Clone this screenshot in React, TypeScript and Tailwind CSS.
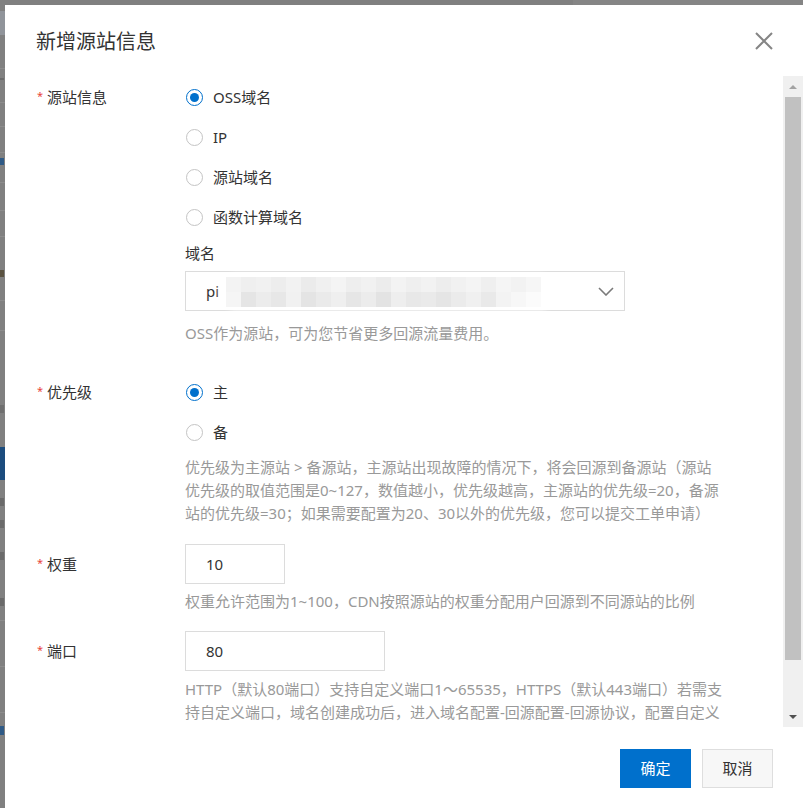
import React from "react";

const FONT = "font-['Noto_Sans','Noto_Sans_CJK_SC',sans-serif]";

function Radio({ checked, label }: { checked?: boolean; label: string }) {
  return (
    <div className="flex h-[40px] items-center">
      <span
        className={
          checked
            ? "ml-[1px] flex h-[17px] w-[17px] items-center justify-center rounded-full border border-[#0070cc] bg-white"
            : "ml-[1px] flex h-[17px] w-[17px] items-center justify-center rounded-full border border-[#c4c4c4] bg-white"
        }
      >
        {checked && <span className="h-[9px] w-[9px] rounded-full bg-[#0070cc]" />}
      </span>
      <span className="ml-[10px] text-[15px] leading-[20px] text-[#333]">{label}</span>
    </div>
  );
}

function Label({ text }: { text: string }) {
  return (
    <div className="flex h-[40px] w-[148px] shrink-0 items-center">
      <span className="mr-[4px] mt-[-2px] text-[11px] leading-[12px] text-[#e8443a]">*</span>
      <span className="text-[15px] leading-[20px] text-[#333]">{text}</span>
    </div>
  );
}

const blockRow1 = [
  "bg-[#f3f3f3]", "bg-[#efefef]", "bg-[#f1f1f1]", "bg-[#ededed]", "bg-[#f2f2f2]", "bg-[#ebebeb]", "bg-[#f0f0f0]",
  "bg-[#f4f4f4]", "bg-[#eeeeee]", "bg-[#f1f1f1]", "bg-[#ececec]", "bg-[#f3f3f3]", "bg-[#efefef]", "bg-[#f2f2f2]",
  "bg-[#ededed]", "bg-[#f1f1f1]", "bg-[#f4f4f4]", "bg-[#efefef]", "bg-[#f5f5f5]", "bg-[#f2f2f2]", "bg-[#f6f6f6]",
];
const blockRow2 = [
  "bg-[#f5f5f5]", "bg-[#e5e5e5]", "bg-[#ececec]", "bg-[#e7e7e7]", "bg-[#f1f1f1]", "bg-[#e4e4e4]", "bg-[#eaeaea]",
  "bg-[#efefef]", "bg-[#e6e6e6]", "bg-[#ececec]", "bg-[#e3e3e3]", "bg-[#eeeeee]", "bg-[#e8e8e8]", "bg-[#eaeaea]",
  "bg-[#e5e5e5]", "bg-[#ebebeb]", "bg-[#f0f0f0]", "bg-[#e9e9e9]", "bg-[#f3f3f3]", "bg-[#f7f7f7]", "bg-[#fbfbfb]",
];

export default function App() {
  return (
    <div className={`relative h-[808px] w-[803px] overflow-hidden bg-[#808080] ${FONT}`}>
      {/* background page glimpse on the left strip */}
      <div className="absolute left-0 top-0 h-full w-[5px]">
        <div className="absolute left-0 top-[11px] h-[24px] w-[5px] bg-[#90949a]" />
        <div className="absolute left-0 top-[68px] h-[1px] w-[5px] bg-[#8c8c8c]" />
        <div className="absolute left-0 top-[78px] h-[2px] w-[4px] bg-[#6b6b6b]" />
        <div className="absolute left-0 top-[102px] h-[1px] w-[5px] bg-[#8c8c8c]" />
        <div className="absolute left-0 top-[126px] h-[1px] w-[5px] bg-[#8c8c8c]" />
        <div className="absolute left-0 top-[158px] h-[7px] w-[4px] bg-[#2f5a86]" />
        <div className="absolute left-0 top-[152px] h-[1px] w-[5px] bg-[#8c8c8c]" />
        <div className="absolute left-0 top-[182px] h-[1px] w-[5px] bg-[#8c8c8c]" />
        <div className="absolute left-0 top-[210px] h-[1px] w-[5px] bg-[#8c8c8c]" />
        <div className="absolute left-0 top-[236px] h-[1px] w-[5px] bg-[#8c8c8c]" />
        <div className="absolute left-0 top-[270px] h-[7px] w-[4px] bg-[#5a5240]" />
        <div className="absolute left-0 top-[300px] h-[1px] w-[5px] bg-[#8c8c8c]" />
        <div className="absolute left-0 top-[330px] h-[1px] w-[5px] bg-[#8c8c8c]" />
        <div className="absolute left-0 top-[405px] h-[8px] w-[4px] bg-[#6f6f6f]" />
        <div className="absolute left-0 top-[447px] h-[33px] w-[5px] bg-[#1c4c7e]" />
        <div className="absolute left-0 top-[498px] h-[8px] w-[4px] bg-[#6a6a6a]" />
        <div className="absolute left-0 top-[520px] h-[8px] w-[4px] bg-[#6a6a6a]" />
        <div className="absolute left-0 top-[552px] h-[8px] w-[4px] bg-[#6a6a6a]" />
        <div className="absolute left-0 top-[598px] h-[8px] w-[4px] bg-[#6a6a6a]" />
        <div className="absolute left-0 top-[620px] h-[1px] w-[5px] bg-[#8c8c8c]" />
        <div className="absolute left-0 top-[666px] h-[1px] w-[5px] bg-[#8c8c8c]" />
        <div className="absolute left-0 top-[712px] h-[1px] w-[5px] bg-[#8c8c8c]" />
        <div className="absolute left-0 top-[726px] h-[9px] w-[4px] bg-[#2f5a86]" />
      </div>
      <div className="absolute right-0 top-0 h-[5px] w-[230px] bg-[#858585]" />

      {/* dialog */}
      <div className="relative ml-[5px] mt-[5px] flex h-[803px] w-[798px] flex-col bg-white">
        {/* header */}
        <div className="relative h-[71px] shrink-0">
          <div className="pl-[31px] pt-[23px] text-[20px] leading-[28px] text-[#333]">新增源站信息</div>
          <button className="absolute right-[30px] top-[27px] h-[18px] w-[18px]">
            <svg viewBox="0 0 18 18" className="h-[18px] w-[18px]">
              <path d="M1 1 L17 17 M17 1 L1 17" stroke="#858585" strokeWidth="2" fill="none" />
            </svg>
          </button>
        </div>

        {/* body */}
        <div className="flex h-[651px] shrink-0">
          <div className="flex-1 overflow-hidden pl-[32px] pt-[1px]">
            {/* 源站信息 */}
            <div className="flex">
              <Label text="源站信息" />
              <div className="flex flex-col">
                <Radio checked label="OSS域名" />
                <Radio label="IP" />
                <Radio label="源站域名" />
                <Radio label="函数计算域名" />
                <div className="mt-[6px] text-[15px] leading-[20px] text-[#333]">域名</div>
                <div className="relative mt-[8px] flex h-[40px] w-[440px] items-center border border-[#dcdcdc] pl-[20px] pr-[10px]">
                  <span className="text-[15px] leading-[20px] text-[#333]">pi</span>
                  <div className="absolute left-[33px] top-[2px] h-[36px] w-[338px] rounded-[18px] bg-white blur-[2px]" />
                  <div className="absolute left-[40px] top-[5px] flex flex-col blur-[0.6px]">
                    <div className="flex">
                      {blockRow1.map((c, i) => (
                        <div key={i} className={`h-[15px] w-[15px] ${c}`} />
                      ))}
                    </div>
                    <div className="flex">
                      {blockRow2.map((c, i) => (
                        <div key={i} className={`h-[15px] w-[15px] ${c}`} />
                      ))}
                    </div>
                  </div>
                  <svg viewBox="0 0 16 9" className="absolute right-[10px] top-[15px] h-[9px] w-[16px]">
                    <path d="M1 1 L8 8 L15 1" stroke="#7a7a7a" strokeWidth="1.6" fill="none" />
                  </svg>
                </div>
                <div className="mt-[11px] text-[15px] leading-[22px] text-[#999]">
                  OSS作为源站，可为您节省更多回源流量费用。
                </div>
              </div>
            </div>

            {/* 优先级 */}
            <div className="mt-[28px] flex">
              <Label text="优先级" />
              <div className="flex flex-col">
                <Radio checked label="主" />
                <Radio label="备" />
                <div className="mt-[4px] whitespace-nowrap text-[15px] leading-[23px] text-[#999]">
                  <div>优先级为主源站 &gt; 备源站，主源站出现故障的情况下，将会回源到备源站（源站</div>
                  <div>优先级的取值范围是0~127，数值越小，优先级越高，主源站的优先级=20，备源</div>
                  <div>站的优先级=30；如果需要配置为20、30以外的优先级，您可以提交工单申请）</div>
                </div>
              </div>
            </div>

            {/* 权重 */}
            <div className="mt-[19px] flex">
              <Label text="权重" />
              <div className="flex flex-col">
                <div className="flex h-[40px] w-[100px] items-center border border-[#dcdcdc] pl-[20px] text-[15px] text-[#333]">
                  10
                </div>
                <div className="mt-[6px] whitespace-nowrap text-[15px] leading-[23px] text-[#999]">
                  权重允许范围为1~100，CDN按照源站的权重分配用户回源到不同源站的比例
                </div>
              </div>
            </div>

            {/* 端口 */}
            <div className="mt-[18px] flex">
              <Label text="端口" />
              <div className="flex flex-col">
                <div className="flex h-[40px] w-[200px] items-center border border-[#dcdcdc] pl-[20px] text-[15px] text-[#333]">
                  80
                </div>
                <div className="mt-[7px] whitespace-nowrap text-[15px] leading-[23px] text-[#999]">
                  <div>HTTP（默认80端口）支持自定义端口1～65535，HTTPS（默认443端口）若需支</div>
                  <div>持自定义端口，域名创建成功后，进入域名配置-回源配置-回源协议，配置自定义</div>
                  <div>端口。</div>
                </div>
              </div>
            </div>
          </div>

          {/* scrollbar */}
          <div className="flex w-[20px] shrink-0 flex-col bg-[#f0f0f0]">
            <div className="flex h-[21px] items-center justify-center">
              <svg viewBox="0 0 8 4" className="h-[4px] w-[8px]">
                <path d="M0 4 L4 0 L8 4 Z" fill="#a3a3a3" />
              </svg>
            </div>
            <div className="mx-[2px] h-[563px] bg-[#c1c1c1]" />
            <div className="flex-1" />
            <div className="flex h-[21px] items-center justify-center">
              <svg viewBox="0 0 8 4" className="h-[4px] w-[8px]">
                <path d="M0 0 L8 0 L4 4 Z" fill="#505050" />
              </svg>
            </div>
          </div>
        </div>

        {/* footer */}
        <div className="flex flex-1 justify-end gap-[11px] pr-[30px] pt-[22px]">
          <button className="h-[39px] w-[71px] bg-[#0070cc] text-[15px] text-white">确定</button>
          <button className="h-[39px] w-[71px] border border-[#dedede] bg-[#f7f7f7] text-[15px] text-[#333]">
            取消
          </button>
        </div>
      </div>
    </div>
  );
}
